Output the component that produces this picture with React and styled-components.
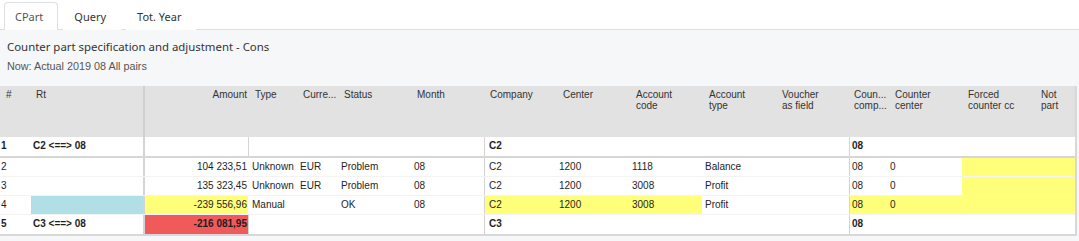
import styled, {createGlobalStyle} from 'styled-components';

const GlobalStyle = createGlobalStyle`
  html, body {
    margin: 0;
    padding: 0;
    background: #f6f7f9;
  }
  * {
    box-sizing: border-box;
  }
`;

// column layout: width, data padding, header padding, separator on the left
const COLUMNS = [
  {key: 'no', label: '#', w: 31, pad: 1, hpad: 6},
  {key: 'rt', label: 'Rt', w: 112, pad: 2, hpad: 5},
  {key: 'amount', label: 'Amount', w: 106, pad: 1, hpad: 2, right: true, sep: 2},
  {key: 'type', label: 'Type', w: 48, pad: 3, hpad: 6},
  {key: 'cur', label: 'Curre...', w: 41, pad: 3, hpad: 6},
  {key: 'status', label: 'Status', w: 73, pad: 3, hpad: 6},
  {key: 'month', label: 'Month', w: 73, pad: 3, hpad: 6},
  {key: 'company', label: 'Company', w: 72, pad: 4, hpad: 6, bodySep: 1},
  {key: 'center', label: 'Center', w: 73, pad: 3, hpad: 7},
  {key: 'acode', label: ['Account', 'code'], w: 73, pad: 3, hpad: 7},
  {key: 'atype', label: ['Account', 'type'], w: 73, pad: 3, hpad: 7},
  {key: 'voucher', label: ['Voucher', 'as field'], w: 74, pad: 3, hpad: 7},
  {key: 'ccomp', label: ['Coun...', 'comp...'], w: 38, pad: 2, hpad: 5, bodySep: 1},
  {key: 'ccenter', label: ['Counter', 'center'], w: 75, pad: 3, hpad: 8},
  {key: 'forced', label: ['Forced', 'counter cc'], w: 72, pad: 3, hpad: 6},
  {key: 'notpart', label: ['Not', 'part'], w: 41, pad: 3, hpad: 7},
];

const GRID = COLUMNS.map((c) => `${c.w}px`).join(' ');

const YELLOW = '#ffff7a';
const BLUE = '#b0e0e6';
const RED = '#f15a5a';

const ROWS = [
  {group: true, no: '1', rt: 'C2 <==> 08', company: 'C2', ccomp: '08'},
  {
    no: '2', amount: '104 233,51', type: 'Unknown', cur: 'EUR', status: 'Problem', month: '08',
    company: 'C2', center: '1200', acode: '1118', atype: 'Balance', ccomp: '08', ccenter: '0',
    fill: {forced: YELLOW, notpart: YELLOW},
  },
  {
    no: '3', amount: '135 323,45', type: 'Unknown', cur: 'EUR', status: 'Problem', month: '08',
    company: 'C2', center: '1200', acode: '3008', atype: 'Profit', ccomp: '08', ccenter: '0',
    fill: {forced: YELLOW, notpart: YELLOW},
  },
  {
    no: '4', amount: '-239 556,96', type: 'Manual', status: 'OK', month: '08',
    company: 'C2', center: '1200', acode: '3008', atype: 'Profit', ccomp: '08', ccenter: '0',
    fill: {
      rt: BLUE, amount: YELLOW, company: YELLOW, center: YELLOW, acode: YELLOW,
      ccomp: YELLOW, ccenter: YELLOW, forced: YELLOW, notpart: YELLOW,
    },
  },
  {group: true, last: true, no: '5', rt: 'C3 <==> 08', amount: '-216 081,95', company: 'C3', ccomp: '08', fill: {amount: RED}},
];

const Page = styled.div`
  display: flex;
  flex-direction: column;
  width: 1079px;
  height: 241px;
  overflow: hidden;
  font-family: 'Liberation Sans', Arial, sans-serif;
`;

const TabBar = styled.div`
  display: flex;
  align-items: flex-end;
  height: 30px;
  padding-left: 4px;
  background: #fff;
  border-bottom: 1px solid #dcdfe3;
`;

const Tab = styled.div`
  height: 28px;
  margin-bottom: -1px;
  margin-right: 5px;
  padding: 0 14px 0 10px;
  display: flex;
  align-items: center;
  font-family: 'Noto Sans', sans-serif;
  font-size: 11px;
  color: ${(p) => (p.$active ? '#555' : '#333')};
  background: #fff;
  border: 1px solid ${(p) => (p.$active ? '#dcdfe3' : 'transparent')};
  border-bottom: none;
  border-radius: 4px 4px 0 0;
`;

const Panel = styled.div`
  flex: 1;
  background: #f6f7f9;
  padding-top: 9px;
`;

const Title = styled.div`
  padding-left: 7px;
  font-family: 'Noto Sans', sans-serif;
  font-size: 11.4px;
  line-height: 16px;
  color: #333;
`;

const Subtitle = styled.div`
  margin-top: 4px;
  padding-left: 7px;
  font-size: 10.8px;
  line-height: 14px;
  color: #555;
`;

const Table = styled.div`
  margin-top: 13px;
  width: 1077px;
  border-right: 2px solid #d8d8d8;
  border-bottom: 2px solid #d8d8d8;
  background: #fff;
  font-size: 10px;
`;

const HeaderRow = styled.div`
  display: grid;
  grid-template-columns: ${GRID};
  height: 51px;
  background: #e2e2e2;
`;

const HeadCell = styled.div`
  padding-top: 3px;
  padding-left: ${(p) => (p.$right ? 0 : p.$pad)}px;
  padding-right: ${(p) => (p.$right ? p.$pad : 0)}px;
  text-align: ${(p) => (p.$right ? 'right' : 'left')};
  border-left: ${(p) => (p.$sep ? `${p.$sep}px solid #d0d0d0` : 'none')};
  line-height: 11px;
  color: #333;
  white-space: nowrap;
`;

const Row = styled.div`
  display: grid;
  grid-template-columns: ${GRID};
  height: ${(p) => (p.$group && !p.$last ? 21 : 19)}px;
  border-bottom: ${(p) => (p.$last ? 'none' : p.$group ? '2px solid #d6d6d6' : '1px solid #f3f3f3')};
  font-weight: ${(p) => (p.$group ? 'bold' : 'normal')};
`;

const Cell = styled.div`
  padding-left: ${(p) => (p.$right ? 0 : p.$pad)}px;
  padding-right: ${(p) => (p.$right ? p.$pad : 0)}px;
  text-align: ${(p) => (p.$right ? 'right' : 'left')};
  line-height: 18px;
  background: ${(p) => p.$bg || 'transparent'};
  border-left: ${(p) => (p.$sep ? `${p.$sep}px solid #d4d4d4` : 'none')};
  border-right: ${(p) => (p.$right ? `1px solid ${p.$group ? '#d4d4d4' : '#fff'}` : 'none')};
  color: #1e1e1e;
  white-space: nowrap;
  overflow: hidden;
`;

const HeadLabel = ({label}) =>
  Array.isArray(label) ? (
    <>
      {label[0]}
      <br />
      {label[1]}
    </>
  ) : (
    label
  );

export default function App() {
  return (
    <Page>
      <GlobalStyle />
      <TabBar>
        <Tab $active>CPart</Tab>
        <Tab>Query</Tab>
        <Tab>Tot. Year</Tab>
      </TabBar>
      <Panel>
        <Title>Counter part specification and adjustment - Cons</Title>
        <Subtitle>Now: Actual 2019 08 All pairs</Subtitle>
        <Table>
          <HeaderRow>
            {COLUMNS.map((c) => (
              <HeadCell key={c.key} $pad={c.hpad} $right={c.right} $sep={c.sep}>
                <HeadLabel label={c.label} />
              </HeadCell>
            ))}
          </HeaderRow>
          {ROWS.map((r) => (
            <Row key={r.no} $group={r.group} $last={r.last}>
              {COLUMNS.map((c) => (
                <Cell
                  key={c.key}
                  $pad={c.pad}
                  $right={c.right}
                  $sep={c.sep || c.bodySep}
                  $group={r.group}
                  $bg={r.fill && r.fill[c.key]}
                >
                  {r[c.key] || ''}
                </Cell>
              ))}
            </Row>
          ))}
        </Table>
      </Panel>
    </Page>
  );
}
